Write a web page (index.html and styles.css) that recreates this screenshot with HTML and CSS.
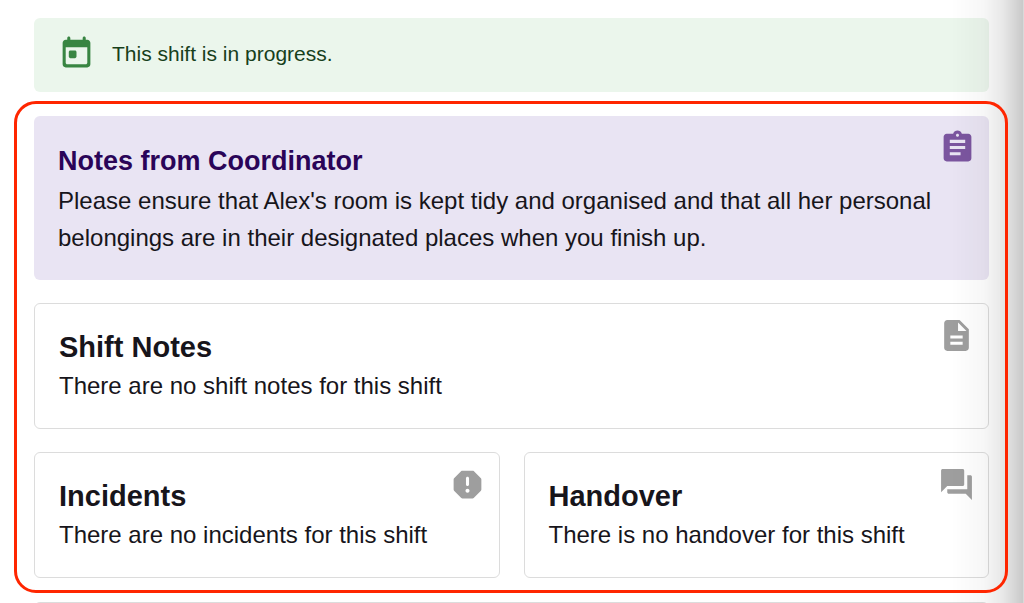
FILE: index.html
```
<!DOCTYPE html>
<html lang="en">
<head>
<meta charset="utf-8">
<meta name="viewport" content="width=device-width, initial-scale=1">
<title>Shift details</title>
<link rel="stylesheet" href="styles.css">
</head>
<body>
<main class="page">
  <div class="alert" role="status">
    <svg class="icon" viewBox="0 0 24 24" aria-hidden="true"><path d="M19 3h-1V2c0-.55-.45-1-1-1s-1 .45-1 1v1H8V2c0-.55-.45-1-1-1s-1 .45-1 1v1H5c-1.11 0-1.99.9-1.99 2L3 19c0 1.1.89 2 2 2h14c1.1 0 2-.9 2-2V5c0-1.1-.9-2-2-2zm-1 16H6c-.55 0-1-.45-1-1V8h14v10c0 .55-.45 1-1 1zM8 10h3c.55 0 1 .45 1 1v3c0 .55-.45 1-1 1H8c-.55 0-1-.45-1-1v-3c0-.55.45-1 1-1z"/></svg>
    <p class="alert-text">This shift is in progress.</p>
  </div>

  <div class="highlight">
    <section class="card card-coordinator">
      <h2 class="card-title">Notes from Coordinator</h2>
      <p class="card-text">Please ensure that Alex's room is kept tidy and organised and that all her personal belongings are in their designated places when you finish up.</p>
      <svg class="icon card-icon" viewBox="0 0 24 24" aria-hidden="true"><path d="M19 3h-4.18C14.4 1.84 13.3 1 12 1c-1.3 0-2.4.84-2.82 2H5c-1.1 0-2 .9-2 2v14c0 1.1.9 2 2 2h14c1.1 0 2-.9 2-2V5c0-1.1-.9-2-2-2zm-7 0c.55 0 1 .45 1 1s-.45 1-1 1-1-.45-1-1 .45-1 1-1zm2 14H7v-2h7v2zm3-4H7v-2h10v2zm0-4H7V7h10v2z"/></svg>
    </section>

    <section class="card">
      <h2 class="card-title">Shift Notes</h2>
      <p class="card-text">There are no shift notes for this shift</p>
      <svg class="icon card-icon" viewBox="0 0 24 24" aria-hidden="true"><path d="M14 2H6c-1.1 0-1.99.9-1.99 2L4 20c0 1.1.89 2 1.99 2H18c1.1 0 2-.9 2-2V8l-6-6zm2 16H8v-2h8v2zm0-4H8v-2h8v2zm-3-5V3.5L18.5 9H13z"/></svg>
    </section>

    <div class="card-row">
      <section class="card">
        <h2 class="card-title">Incidents</h2>
        <p class="card-text">There are no incidents for this shift</p>
        <svg class="icon card-icon" viewBox="0 0 24 24" aria-hidden="true"><path d="M15.32 3H8.68c-.26 0-.52.11-.7.29L3.29 7.98c-.18.18-.29.44-.29.7v6.63c0 .27.11.52.29.71l4.68 4.68c.19.19.45.3.71.3h6.63c.27 0 .52-.11.71-.29l4.68-4.68c.19-.19.29-.44.29-.71V8.68c0-.27-.11-.52-.29-.71l-4.68-4.68c-.18-.18-.44-.29-.7-.29zM12 17.3c-.72 0-1.3-.58-1.3-1.3s.58-1.3 1.3-1.3 1.3.58 1.3 1.3-.58 1.3-1.3 1.3zm0-4.3c-.55 0-1-.45-1-1V8c0-.55.45-1 1-1s1 .45 1 1v4c0 .55-.45 1-1 1z"/></svg>
      </section>
      <section class="card">
        <h2 class="card-title">Handover</h2>
        <p class="card-text">There is no handover for this shift</p>
        <svg class="icon card-icon" viewBox="0 0 24 24" aria-hidden="true"><path d="M21 6h-2v9H6v2c0 .55.45 1 1 1h11l4 4V7c0-.55-.45-1-1-1zm-4 6V3c0-.55-.45-1-1-1H3c-.55 0-1 .45-1 1v14l4-4h10c.55 0 1-.45 1-1z"/></svg>
      </section>
    </div>
  </div>

  <section class="card card-next"></section>
</main>
</body>
</html>
```
FILE: styles.css
```
* {
  box-sizing: border-box;
}

body {
  margin: 0;
  background: #fff;
  color: #17151b;
  font-family: "Liberation Sans", Arial, sans-serif;
}

.page {
  position: relative;
  display: flex;
  flex-direction: column;
  gap: 9px;
  height: 100vh;
  overflow: hidden;
  padding: 18px 16px 0 14px;
}

.page > * {
  flex: none;
}

/* Shade cast by the panel edge on the right */
.page::after {
  content: "";
  position: absolute;
  inset: 0 0 0 auto;
  width: 72px;
  border-right: 1px solid rgba(0, 0, 0, 0.15);
  background: linear-gradient(to right, rgba(0, 0, 0, 0), rgba(0, 0, 0, 0.03) 45%, rgba(0, 0, 0, 0.09) 72%, rgba(0, 0, 0, 0.21));
  pointer-events: none;
}

.icon {
  flex: none;
  width: 37px;
  height: 37px;
  fill: currentColor;
}

.alert {
  display: flex;
  align-items: center;
  gap: 17px;
  margin: 0 19px 0 20px;
  padding: 17px 24px 20px;
  border-radius: 6px;
  background: #ebf6ec;
  color: #388542;
}

.alert-text {
  margin: 0;
  color: #173f1b;
  font-size: 21px;
  line-height: 32px;
}

.highlight {
  position: relative;
  display: flex;
  flex-direction: column;
  gap: 23px;
  padding: 15px 19px 15px 20px;
}

.highlight::before {
  content: "";
  position: absolute;
  inset: 0;
  z-index: 2;
  border: 3px solid #ff2600;
  border-radius: 22px;
  pointer-events: none;
}

.card {
  position: relative;
  padding: 24px;
  border: 1px solid #dcdcdc;
  border-radius: 6px;
}

.card-title {
  margin: 0;
  font-size: 29px;
  line-height: 39px;
}

.card-text {
  margin: 0;
  font-size: 24px;
  line-height: 37px;
}

.card-icon {
  position: absolute;
  top: 13px;
  right: 13px;
  color: #9e9e9e;
}

.card-coordinator {
  border: 0;
  background: #e9e4f3;
}

.card-coordinator .card-title {
  color: #2a0458;
  font-size: 27px;
  line-height: 42px;
}

.card-coordinator .card-icon {
  color: #7b559f;
}

.card-row {
  display: grid;
  grid-template-columns: 1fr 1fr;
  gap: 24px;
}

.card-next {
  margin: 0 19px 0 20px;
}
```
